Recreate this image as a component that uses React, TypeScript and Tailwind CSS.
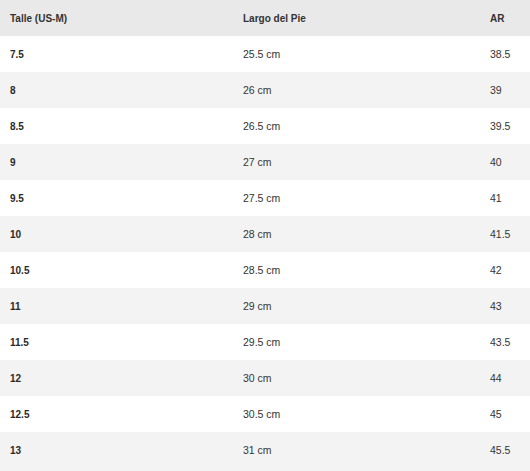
import React from "react";

const rows: [string, string, string][] = [
  ["7.5", "25.5 cm", "38.5"],
  ["8", "26 cm", "39"],
  ["8.5", "26.5 cm", "39.5"],
  ["9", "27 cm", "40"],
  ["9.5", "27.5 cm", "41"],
  ["10", "28 cm", "41.5"],
  ["10.5", "28.5 cm", "42"],
  ["11", "29 cm", "43"],
  ["11.5", "29.5 cm", "43.5"],
  ["12", "30 cm", "44"],
  ["12.5", "30.5 cm", "45"],
  ["13", "31 cm", "45.5"],
];

export default function App() {
  return (
    <div
      className="w-[530px] h-[471px] bg-[#f3f3f3] text-[#333]"
      style={{ fontFamily: "'Liberation Sans', Arial, sans-serif" }}
    >
      <div className="grid grid-cols-[233px_247px_1fr] h-9 leading-[37px] px-[10px] bg-[#e9e9e9] font-bold text-[10px]">
        <div>Talle (US-M)</div>
        <div>Largo del Pie</div>
        <div>AR</div>
      </div>
      {rows.map((r, i) => (
        <div
          key={r[0]}
          className={
            "grid grid-cols-[233px_247px_1fr] h-9 leading-[37px] px-[10px] text-[10.5px] " +
            (i % 2 === 0 ? "bg-white" : "bg-[#f3f3f3]")
          }
        >
          <div className="font-bold text-[10px] text-[#2a2a2a]">{r[0]}</div>
          <div>{r[1]}</div>
          <div>{r[2]}</div>
        </div>
      ))}
    </div>
  );
}
